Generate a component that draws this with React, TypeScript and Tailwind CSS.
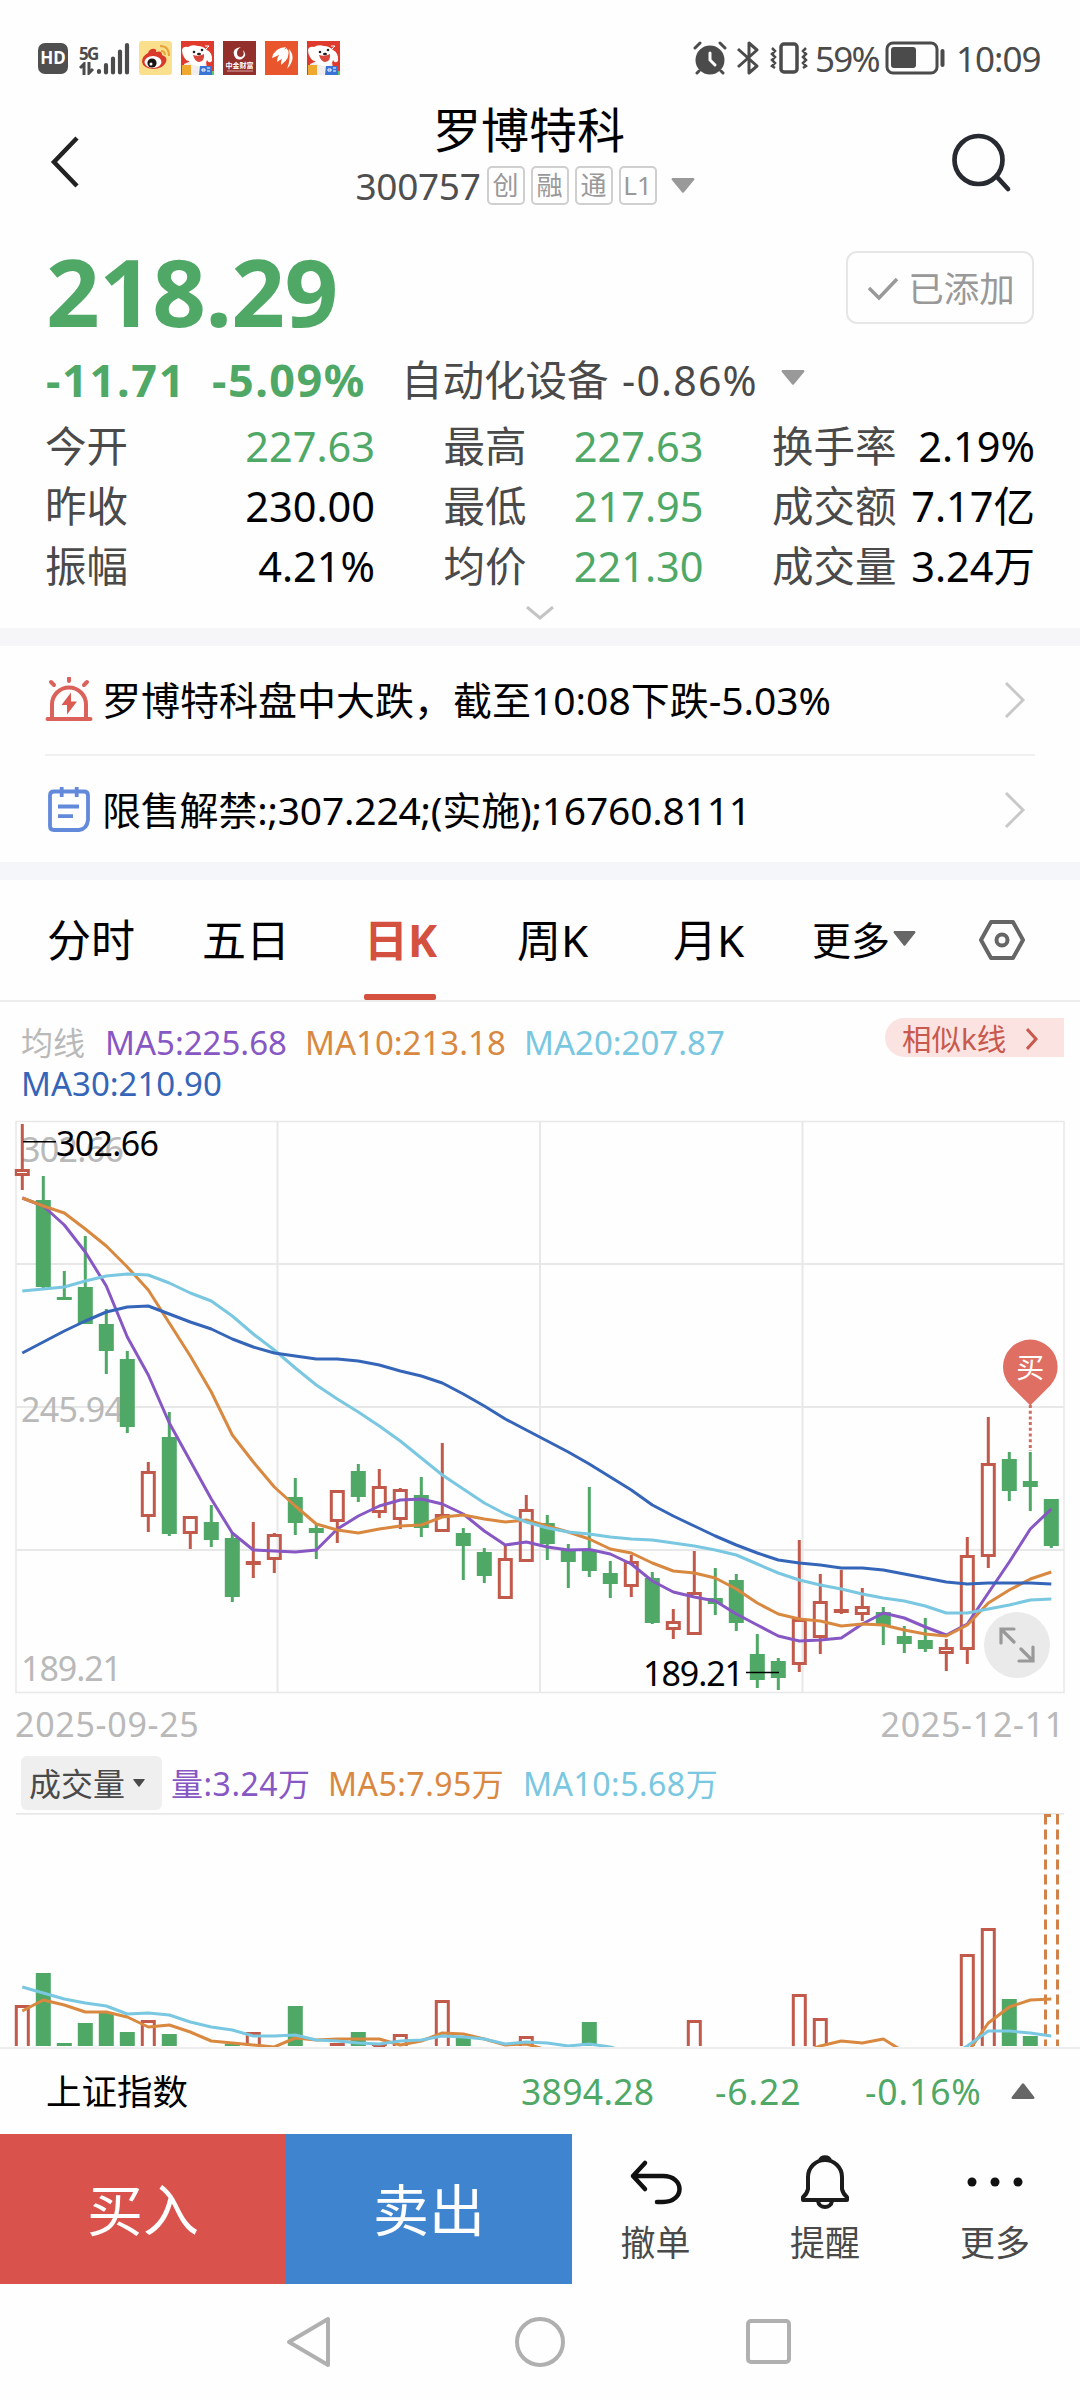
import type { ReactNode } from 'react';

type Candle = [string, number, number, number, number];

// color, high, body top, body bottom, low
const candles: Candle[] = [
  ['R', 24, 69, 76, 90], ['G', 76, 100, 187, 188], ['G', 171, 197, 200, 200], ['G', 136, 187, 224, 224], ['G', 209, 224, 251, 274],
  ['G', 251, 259, 327, 333], ['R', 362, 371, 417, 432], ['G', 312, 337, 434, 436], ['R', 416, 416, 434, 449], ['G', 405, 422, 440, 447],
  ['G', 432, 438, 497, 502], ['R', 422, 461, 465, 478], ['R', 433, 434, 460, 473], ['G', 378, 397, 423, 435], ['G', 424, 428, 433, 459],
  ['R', 390, 390, 422, 443], ['G', 364, 371, 397, 402], ['R', 369, 386, 413, 418], ['R', 388, 389, 420, 429], ['G', 377, 395, 428, 437],
  ['R', 343, 414, 432, 432], ['G', 428, 433, 446, 480], ['G', 448, 452, 476, 483], ['R', 445, 458, 499, 499], ['R', 395, 409, 462, 462],
  ['G', 415, 423, 444, 460], ['G', 444, 449, 462, 488], ['G', 387, 450, 471, 477], ['G', 461, 473, 484, 498], ['R', 455, 461, 487, 497],
  ['G', 472, 478, 523, 524], ['R', 509, 521, 530, 539], ['R', 451, 492, 535, 535], ['G', 468, 498, 504, 515], ['G', 474, 480, 523, 531],
  ['G', 534, 554, 580, 588], ['G', 558, 561, 578, 590], ['R', 440, 519, 565, 572], ['R', 474, 501, 538, 554], ['R', 470, 509, 513, 514],
  ['R', 488, 506, 515, 521], ['G', 507, 512, 526, 545], ['G', 526, 536, 544, 553], ['G', 518, 540, 549, 552], ['R', 539, 547, 554, 571],
  ['R', 437, 455, 550, 564], ['R', 317, 363, 457, 468], ['G', 352, 359, 391, 401], ['G', 352, 381, 387, 411], ['G', 399, 399, 446, 448],
];

const ma5 = [98, 106, 125, 152, 186, 237, 275, 323, 361, 399, 433, 450, 451, 452, 450, 429, 416, 406, 400, 399, 404, 414, 431, 445, 442, 447, 450, 449.5, 454, 464, 481, 492, 497, 501, 514, 525, 536, 541, 540, 538, 524, 513, 518, 527, 535, 524, 493, 462, 429, 409];
const ma10 = [98, 106, 113, 129, 146, 167, 190, 223, 256, 292, 335, 362, 387, 406, 424, 430, 433, 429, 426, 425, 417, 415, 419, 422, 420, 426, 432, 439, 449, 453, 463, 471, 473, 478, 489, 503, 514, 519, 521, 526, 524, 525, 530, 534, 536, 525, 503, 490, 479, 472];
const ma20 = [191, 189, 187, 181, 176, 174, 175, 183, 193, 201, 216, 234, 250, 268, 285, 299, 312, 326, 341, 358, 375, 389, 403, 414, 422, 428, 432, 434, 437, 439, 440, 443, 446, 450, 455, 464, 473, 480, 485, 489, 494, 498, 501, 506, 513, 513, 509, 505, 500, 499];
const ma30 = [253, 242, 231, 221, 212, 207, 206, 214, 222, 229, 239, 247, 253, 256, 259, 259, 261, 265, 271, 276, 283, 294, 306, 319, 330, 341, 352, 364, 377, 390, 405, 416, 426, 436, 445, 453, 460, 463, 465, 468, 468, 470, 474, 478, 482, 484, 483, 483, 483, 484];

// index, color, bar top
const volumes: [number, string, number][] = [
  [0, 'R', 192], [1, 'G', 160], [2, 'G', 230], [3, 'G', 210], [4, 'G', 200], [5, 'G', 219], [6, 'R', 207], [7, 'G', 221],
  [10, 'G', 231], [11, 'R', 219], [13, 'G', 193], [15, 'R', 230], [16, 'G', 219], [17, 'R', 231], [18, 'R', 221], [20, 'R', 187],
  [21, 'G', 224], [24, 'R', 223], [27, 'G', 209], [32, 'R', 207], [37, 'R', 181], [38, 'R', 205], [45, 'R', 141], [46, 'R', 115],
  [47, 'G', 186], [48, 'G', 223],
];
const volMa5 = [198, 187, 192, 199, 199, 204, 214, 212, 219, 228, 230, 232, 234, 225, 227, 226, 226, 226, 232, 228, 220, 221, 226, 232, 231, 237, 245, 245, 245, 245, 245, 245, 245, 245, 245, 245, 245, 240, 233, 228, 230, 226, 239, 250, 250, 240, 210, 194, 187, 186];
const volMa10 = [174, 180, 186, 190, 193, 201, 200, 202, 209, 214, 217, 223, 223, 222, 227, 228, 230, 231, 228, 227, 223, 224, 226, 231, 229, 230, 233, 231, 234, 240, 245, 245, 245, 245, 245, 245, 245, 245, 245, 245, 245, 245, 245, 245, 245, 233, 218, 218, 220, 223];

const RED = '#c25a4b';
const GREEN = '#4fa866';

const cx = (i: number) => 22.3 + i * 21;
const points = (ys: number[]) => ys.map((y, i) => `${cx(i)},${y}`).join(' ');

const quotes = [
  [
    { label: '今开', value: '227.63', down: true },
    { label: '昨收', value: '230.00', down: false },
    { label: '振幅', value: '4.21%', down: false },
  ],
  [
    { label: '最高', value: '227.63', down: true },
    { label: '最低', value: '217.95', down: true },
    { label: '均价', value: '221.30', down: true },
  ],
  [
    { label: '换手率', value: '2.19%', down: false },
    { label: '成交额', value: '7.17亿', down: false },
    { label: '成交量', value: '3.24万', down: false },
  ],
];

function Triangle({ className, up }: { className: string; up?: boolean }) {
  return (
    <svg className={className} viewBox="0 0 24 15" preserveAspectRatio="none" fill="currentColor">
      <path d={up ? 'M1.5 15h21q1.5-.8.6-2L13 .8q-1-1.200-2 0L.9 13q-.9 1.200.6 2z' : 'M1.5 0h21q1.5.8.6 2L13 14.200q-1 1.200-2 0L.9 2q-.9-1.200.6-2z'} />
    </svg>
  );
}

function JdIcon() {
  return (
    <svg className="h-[34px] w-[33px]" viewBox="0 0 33 34">
      <rect width="33" height="34" fill="#df3a2c" />
      <path d="M3 23l9-4 13 2 2 13H5z" fill="#f1eeee" />
      <path d="M1 9q1-4 6-3 4-3 10-1 5 0 9 4 6 3 5 11-3 3-5-1-1 6-8 6-8 0-10-5-3 0-5-4-2-3-2-7z" fill="#fff" />
      <path d="M12 14q6 2 11-1 1 7-5 8-4 0-6-7z" fill="#d9463c" />
      <circle cx="13" cy="11" r="1.300" fill="#222" />
      <circle cx="21" cy="9" r="1.300" fill="#222" />
      <ellipse cx="18" cy="13" rx="2" ry="1.300" fill="#222" />
      <path d="M24 5h4l-3 3" stroke="#fff" fill="none" />
      <path d="M1 24h9v10H1z" fill="#efa92e" />
      <path d="M19 25h12v9H18z" fill="#3a73d6" />
      <path d="M21 28h3v2h-3zM26 27h3m-3 3h3" stroke="#fff" fill="none" />
      <path d="M31 30h2v4h-2z" fill="#5cc96a" />
    </svg>
  );
}

function StatusBar() {
  return (
    <div className="flex h-[104px] items-center pt-[14px] pb-[2px] text-[#4b4b4b]">
      <div className="ml-[38px] flex h-[31px] w-[30px] items-center justify-center rounded-[7px] bg-[#4f4f4f] text-[17px] font-bold text-white">HD</div>
      <div className="ml-[11px] flex h-[34px] items-end">
        <div className="flex w-[17px] flex-col">
          <span className="text-[17px] leading-[17px] font-bold tracking-[-1.8px]">5G</span>
          <svg className="h-[13px] w-[16px]" viewBox="0 0 16 13" fill="none" stroke="currentColor" strokeWidth="3">
            <path d="M5 13V2L1 6M10 0v11l4-4" />
          </svg>
        </div>
        <svg className="h-[33px] w-[34px]" viewBox="0 0 34 33" stroke="currentColor" strokeWidth="4.200" strokeLinecap="round">
          <path d="M3 29v1M10 23v7.500M17 16.500v14M24 9.500v21M31 3v27.500" />
        </svg>
      </div>
      <svg className="ml-[9px] h-[34px] w-[33px]" viewBox="0 0 33 34">
        <rect width="33" height="34" rx="3" fill="#fae08c" />
        <path d="M3 21q0-6 6-9 2-5 7-4 2 1 1 3 6-2 6 3 6 2 4 7-3 7-13 7-10-1-11-7z" fill="#d9382b" />
        <ellipse cx="14" cy="21" rx="8.500" ry="6" fill="#fff" />
        <circle cx="13" cy="22" r="4.600" fill="#1b1414" />
        <circle cx="12" cy="23" r="1.500" fill="#fff" />
        <path d="M21 5q9 0 9 10M22 10q4 0 4 4" fill="none" stroke="#e8a23a" strokeWidth="2" />
      </svg>
      <div className="ml-[9px]"><JdIcon /></div>
      <svg className="ml-[9px] h-[34px] w-[33px]" viewBox="0 0 33 34">
        <rect width="33" height="34" fill="#93302c" />
        <path d="M18 6q-9 1-7 8 2 6 8 4 6-4 1-9 2 6-2 7-4 0-4-4 0-4 4-6z" fill="#fff" />
        <text x="16.500" y="27" fontSize="7" textAnchor="middle" fill="#fff" fontWeight="bold">中金财富</text>
        <path d="M4 30h26" stroke="#d8a8a4" strokeWidth="1" />
      </svg>
      <svg className="ml-[9px] h-[34px] w-[33px]" viewBox="0 0 33 34">
        <rect width="33" height="34" fill="#e9552c" />
        <path d="M7 17Q9 7 21 6q-4 8-14 11zM12 21Q12 12 22 7q1 8-10 14zM16 24q0-9 7-16 3 9-7 16zM22 28q4-10 2-20 8 9-2 20z" fill="#fff" />
      </svg>
      <div className="ml-[9px]"><JdIcon /></div>

      <svg className="ml-[353px] h-[36px] w-[34px]" viewBox="0 0 34 36" fill="none" stroke="currentColor" strokeWidth="3" strokeLinecap="round">
        <circle cx="17" cy="20" r="14.500" fill="currentColor" stroke="none" />
        <path d="M2 8l5-5M32 8l-5-5M6 31l-2 2M28 31l2 2" />
        <path d="M17 13v7l5 5" stroke="#fff" />
      </svg>
      <svg className="ml-[10px] h-[36px] w-[22px]" viewBox="0 0 22 36" fill="none" stroke="currentColor" strokeWidth="3" strokeLinejoin="round">
        <path d="M1 9l19 17-8 7V3l8 7L1 27" />
      </svg>
      <svg className="ml-[11px] h-[34px] w-[38px]" viewBox="0 0 38 34" fill="none" stroke="currentColor">
        <rect x="11" y="3" width="16" height="28" rx="3" strokeWidth="3.500" />
        <path d="M2 7l3 3-3 3 3 3-3 3 3 3-3 3 3 2M36 7l-3 3 3 3-3 3 3 3-3 3 3 3-3 2" strokeWidth="2.500" />
      </svg>
      <span className="ml-[7px] w-[64px] pt-[2px] text-[35px] tracking-[-1.8px] whitespace-nowrap">59%</span>
      <svg className="ml-[6px] h-[34px] w-[60px]" viewBox="0 0 60 34" fill="none" stroke="currentColor">
        <rect x="2" y="2" width="50" height="30" rx="6" strokeWidth="3" />
        <rect x="6" y="6" width="25" height="21" rx="3" fill="currentColor" stroke="none" />
        <path d="M57.500 10v14" strokeWidth="4" strokeLinecap="round" />
      </svg>
      <span className="ml-[11px] pt-[2px] text-[35px] tracking-[-1px]">10:09</span>
    </div>
  );
}

function TitleBar() {
  return (
    <div className="flex h-[108px]">
      <svg className="mt-[32px] ml-[50px] h-[52px] w-[30px] shrink-0" viewBox="0 0 30 52" fill="none" stroke="#222" strokeWidth="4.500">
        <path d="M27 2L4 26l23 24" />
      </svg>
      <div className="flex w-[890px] flex-col items-center">
        <h1 className="h-[56px] pl-[8px] text-[48px] leading-[52px] text-black">罗博特科</h1>
        <div className="flex h-[50px] items-center">
          <span className="mr-[6px] pt-[2px] text-[37px] tracking-[-0.3px] text-[#4f4f4f]">300757</span>
          <div className="flex gap-[6px]">
            {['创', '融', '通', 'L1'].map((tag) => (
              <span key={tag} className="flex h-[39px] w-[38px] items-center justify-center rounded-[5px] border-2 border-[#cfcfcf] text-[26px] leading-none text-[#999]">
                {tag}
              </span>
            ))}
          </div>
          <Triangle className="ml-[14px] h-[15px] w-[24px] text-[#999]" />
        </div>
      </div>
      <svg className="mt-[26px] -ml-[20px] h-[66px] w-[64px] shrink-0" viewBox="0 0 64 66" fill="none" stroke="#272a31" strokeWidth="4.700" strokeLinecap="round">
        <circle cx="28.500" cy="30" r="24" />
        <path d="M47 47l11 12" />
      </svg>
    </div>
  );
}

function QuoteHeader() {
  return (
    <section className="h-[416px] px-[46px]">
      <div className="flex h-[116px] justify-between">
        <div className="pt-[32px] text-[94px] leading-[94px] font-bold tracking-[-0.6px] text-[#4fa866]">218.29</div>
        <div className="mt-[39px] flex h-[73px] w-[188px] items-center justify-center gap-[9px] rounded-[11px] border-2 border-[#e6e6e6] pt-[2px] pl-[2px] text-[35.5px] text-[#999]">
          <svg className="h-[24px] w-[32px] shrink-0" viewBox="0 0 32 24" fill="none" stroke="currentColor" strokeWidth="3.500">
            <path d="M2 11l10 10L30 2" />
          </svg>
          <span>已添加</span>
        </div>
      </div>
      <div className="flex h-[88px] items-center pt-[16px] text-[41px] whitespace-nowrap">
        <span className="w-[166px] text-[45px] font-bold tracking-[1.7px] text-[#4fa866]">-11.71</span>
        <span className="w-[189px] text-[45px] font-bold tracking-[1.5px] text-[#4fa866]">-5.09%</span>
        <span className="w-[221px] text-[41.5px] text-[#4a4a4a]">自动化设备</span>
        <span className="w-[159px] pt-[2px] tracking-[1.2px] text-[#4a4a4a]">-0.86%</span>
        <Triangle className="mb-[5px] h-[15px] w-[24px] text-[#999]" />
      </div>
      <div className="-mx-px flex justify-between text-[41.5px]">
        {quotes.map((col, i) => (
          <div key={i} className={i === 1 ? 'w-[260px]' : i === 0 ? 'w-[330px]' : 'w-[263px]'}>
            {col.map((q) => (
              <div key={q.label} className="flex h-[60px] items-center justify-between leading-[60px] whitespace-nowrap">
                <span className="text-[#4a4a4a]">{q.label}</span>
                <span className={q.down ? 'text-[#4fa866]' : 'text-black'}>{q.value}</span>
              </div>
            ))}
          </div>
        ))}
      </div>
      <svg className="mx-auto mt-[10px] h-[15px] w-[28px]" viewBox="0 0 28 15" fill="none" stroke="#c4c4c4" strokeWidth="3">
        <path d="M1 1l13 11L27 1" />
      </svg>
    </section>
  );
}

function NoticeRow({ icon, children }: { icon: ReactNode; children: ReactNode }) {
  return (
    <div className="flex h-[108px] items-center">
      {icon}
      <span className="ml-[9px] flex-1 whitespace-nowrap text-black">{children}</span>
      <svg className="mr-[9px] h-[38px] w-[22px]" viewBox="0 0 22 38" fill="none" stroke="#c8c8c8" strokeWidth="3">
        <path d="M2 2l17 17L2 36" />
      </svg>
    </div>
  );
}

function Notices() {
  return (
    <section className="h-[216px] px-[45px] text-[39px]">
      <div className="border-b-2 border-[#efefef]">
        <NoticeRow
          icon={
            <svg className="h-[46px] w-[48px]" viewBox="0 0 48 46" fill="none" stroke="#db625b" strokeWidth="4" strokeLinecap="round">
              <path d="M2.500 42h43M7 41V27.500a17 17 0 0134 0V41M24 1v3" />
              <path d="M6 5l3 3M42 5l-3 3" />
              <path d="M26 15.500L16.500 28H22v9.500l10-13h-6z" fill="#db5a53" stroke="none" />
            </svg>
          }
        >
          罗博特科盘中大跌，截至10:08下跌-5.03%
        </NoticeRow>
      </div>
      <NoticeRow
        icon={
          <svg className="h-[46px] w-[48px]" viewBox="0 0 48 46" fill="none" stroke="#6389db" strokeWidth="3.800">
            <path d="M9 4.500h30q4 0 4 4V33q-1 9-9 10H9q-4 0-4-4V8.500q0-4 4-4zM16.700 0v10M31.700 0v10M13 19.500h21M13 29.200h15" />
          </svg>
        }
      >
        <span className="tracking-[-0.2px]">限售解禁:;307.224;(实施);16760.8111</span>
      </NoticeRow>
    </section>
  );
}

function Tabs() {
  return (
    <nav className="flex h-[122px] items-stretch border-b-2 border-[#ededed] text-[44px] whitespace-nowrap text-black">
      <span className="ml-[47px] w-[155px] leading-[121px]">分时</span>
      <span className="w-[162px] leading-[121px]">五日</span>
      <span className="flex w-[153px] flex-col text-[#d4513f]">
        <span className="h-[114px] font-bold leading-[121px]">日K</span>
        <span className="h-[6px] w-[72px] rounded-[2px] bg-[#d4513f]" />
      </span>
      <span className="w-[156px] leading-[121px]">周K</span>
      <span className="w-[139px] leading-[121px]">月K</span>
      <span className="w-[81px] text-[39px] leading-[119px]">更多</span>
      <Triangle className="mt-[51px] h-[15px] w-[23px] text-[#666]" />
      <svg className="mt-[39px] ml-[62px] h-[42px] w-[48px]" viewBox="0 0 48 42" fill="none" stroke="#666" strokeWidth="4">
        <path d="M13 3h22l10 18-10 18H13L3 21z" strokeLinejoin="round" />
        <circle cx="24" cy="21" r="5.500" />
      </svg>
    </nav>
  );
}

function KLineChart() {
  return (
    <div className="relative h-[600px]">
      <svg className="block h-[600px] w-[1080px]" viewBox="0 0 1080 600">
        <g stroke="#e8e8e8" strokeWidth="2" fill="none">
          <rect x="16" y="21.500" width="1048" height="571" strokeWidth="1.500" />
          <path d="M277.500 22v570M540 22v570M802.500 22v570M16 164h1048M16 307h1048M16 450h1048" />
        </g>
        <g fontSize="34" fill="#b9b9b9">
          <text x="21" y="61.500" textLength="103">302.66</text>
          <text x="21" y="321.500" textLength="103">245.94</text>
          <text x="21" y="580.500" textLength="101">189.21</text>
        </g>
        {candles.map(([c, high, top, bottom, low], i) => {
          const x = cx(i);
          if (c === 'G') {
            return (
              <g key={i} fill={GREEN}>
                <rect x={x - 1.5} y={high} width="3" height={low - high} />
                <rect x={x - 7.5} y={top} width="15" height={bottom - top} />
              </g>
            );
          }
          return (
            <g key={i} fill="none" stroke={RED} strokeWidth="3">
              <path d={`M${x} ${high}V${top + 1}M${x} ${bottom - 1}V${low}`} />
              <rect x={x - 6} y={top + 1.5} width="12" height={Math.max(bottom - top - 3, 1)} />
            </g>
          );
        })}
        <g fill="none" strokeWidth="3" strokeLinejoin="round">
          <polyline points={points(ma5)} stroke="#8757c4" />
          <polyline points={points(ma10)} stroke="#d98840" />
          <polyline points={points(ma20)} stroke="#79c7e0" />
          <polyline points={points(ma30)} stroke="#3565b8" />
        </g>
        <g stroke="#000" strokeWidth="1.500">
          <path d="M23 41.700h33M746 572.500h33" />
        </g>
        <g fontSize="34" fill="#000">
          <text x="56" y="55.500" textLength="103">302.66</text>
          <text x="643" y="586" textLength="101">189.21</text>
        </g>
        <path d="M1030.300 305v46" stroke="#cf6b60" strokeWidth="3" strokeDasharray="3 2.700" />
        <path d="M1030.300 305.500l-20-20a27.300 27.300 0 1140 0z" fill="#e06f63" />
        <text x="1030.300" y="278" fontSize="28" fill="#fff" textAnchor="middle">买</text>
      </svg>
      <button className="absolute top-[512px] left-[984px] flex size-[66px] items-center justify-center rounded-full bg-[#eaeaea]">
        <svg className="size-[38px]" viewBox="0 0 38 38" fill="none" stroke="#999" strokeWidth="3.200" strokeLinecap="round">
          <path d="M3 17V3h13M4 4l12 12M35 21v14H21M34 34L23 23" />
        </svg>
      </button>
    </div>
  );
}

function VolumeChart() {
  return (
    <svg className="block h-[234px] w-[1080px]" viewBox="0 0 1080 234">
      <path d="M16 .8h1048" stroke="#e8e8e8" strokeWidth="2" />
      {volumes.map(([i, c, top]) => {
        const x = cx(i);
        return c === 'G' ? (
          <rect key={i} x={x - 7.5} y={top} width="15" height={233 - top} fill={GREEN} />
        ) : (
          <path key={i} d={`M${x - 6} 233V${top + 1.5}h12V233`} fill="none" stroke={RED} strokeWidth="3" />
        );
      })}
      <path d="M1045.500 1.500V233M1057.500 1.500V233" stroke="#d0824a" strokeWidth="3" strokeDasharray="10 5" />
      <path d="M1044 2.500h7M1056 2.500h3" stroke="#d0824a" strokeWidth="3" />
      <g fill="none" strokeWidth="3" strokeLinejoin="round">
        <polyline points={points(volMa5)} stroke="#d98840" />
        <polyline points={points(volMa10)} stroke="#79c7e0" />
      </g>
    </svg>
  );
}

function BottomBar() {
  return (
    <div className="flex h-[150px]">
      <button className="w-[286px] bg-[#d9524b] text-[56px] text-white">买入</button>
      <button className="w-[286px] bg-[#3f84cf] text-[56px] text-white">卖出</button>
      <div className="flex flex-1 text-[35px] text-[#4a4a4a]">
        <div className="flex w-[167px] flex-col items-center pt-[22px]">
          <svg className="h-[54px] w-[54px]" viewBox="0 0 54 54" fill="none" stroke="#111" strokeWidth="4.500" strokeLinecap="round" strokeLinejoin="round">
            <path d="M16 7L4 20l12 13M4 20h30c22 0 22 26 0 26h-6" />
          </svg>
          <span className="mt-[8px] leading-[50px]">撤单</span>
        </div>
        <div className="flex w-[172px] flex-col items-center pt-[21px]">
          <svg className="h-[55px] w-[52px]" viewBox="0 0 52 55" fill="none" stroke="#1c1c1c" strokeWidth="4" strokeLinejoin="round">
            <path d="M9 22a17 17 0 0134 0v12q1 5 5 8v3H4v-3q4-3 5-8zM21 6c0-5 10-5 10 0M19 46c1 8 13 8 14 0" />
          </svg>
          <span className="mt-[8px] leading-[50px]">提醒</span>
        </div>
        <div className="flex w-[168px] flex-col items-center pt-[21px]">
          <svg className="h-[55px] w-[58px]" viewBox="0 0 58 55" fill="#111">
            <circle cx="6" cy="27" r="4.500" />
            <circle cx="29" cy="27" r="4.500" />
            <circle cx="52" cy="27" r="4.500" />
          </svg>
          <span className="mt-[8px] leading-[50px]">更多</span>
        </div>
      </div>
    </div>
  );
}

export default function App() {
  return (
    <div className="h-[2400px] w-[1080px] overflow-hidden bg-[#fefefe] font-['Noto_Sans','Noto_Sans_CJK_SC',sans-serif]">
      <StatusBar />
      <TitleBar />
      <QuoteHeader />
      <div className="h-[18px] bg-[#f6f6f8]" />
      <Notices />
      <div className="h-[18px] bg-[#f5f6f9]" />
      <Tabs />

      <div className="flex h-[98px] justify-between pt-[16px] pl-[21px] text-[33px] leading-[42px] whitespace-nowrap">
        <div className="pt-[4px]">
          <div className="flex h-[41px]">
            <span className="w-[84px] text-[32px] text-[#b9b9b9]">均线</span>
            <span className="w-[200px] text-[#8757c4]">MA5:225.68</span>
            <span className="w-[219px] text-[#d98840]">MA10:213.18</span>
            <span className="text-[#79c7e0]">MA20:207.87</span>
          </div>
          <div className="text-[#3565b8]">MA30:210.90</div>
        </div>
        <div className="mr-[16px] flex h-[39px] w-[179px] items-center rounded-l-[20px] bg-[#fae3e0] pt-[3px] pl-[17px] text-[29.5px] text-[#c9584e]">
          <span className="w-[124px]">相似k线</span>
          <svg className="h-[22px] w-[12px]" viewBox="0 0 12 22" fill="none" stroke="currentColor" strokeWidth="3">
            <path d="M1 1l9 10-9 10" />
          </svg>
        </div>
      </div>

      <KLineChart />

      <div className="flex h-[56px] justify-between px-[15px] text-[34px] leading-[48px] tracking-[0.7px] text-[#b9b9b9]">
        <span>2025-09-25</span>
        <span>2025-12-11</span>
      </div>
      <div className="flex h-[57px] pl-[21px] text-[32px] leading-[55px] tracking-[0.5px] whitespace-nowrap">
        <div className="mr-[9px] flex h-[54px] w-[141px] items-center gap-[8px] rounded-[6px] bg-[#efefef] pl-[8px] tracking-normal text-[#4a4a4a]">
          <span>成交量</span>
          <Triangle className="h-[8px] w-[12px]" />
        </div>
        <span className="w-[157px] text-[#8757c4]">量:3.24万</span>
        <span className="w-[195px] text-[#d98840]">MA5:7.95万</span>
        <span className="text-[#79c7e0]">MA10:5.68万</span>
      </div>
      <VolumeChart />

      <div className="flex h-[87px] items-center border-t-2 border-[#ededed] pl-[46px] text-[35.5px] whitespace-nowrap text-[#4fa866]">
        <span className="w-[475px] text-black">上证指数</span>
        <span className="w-[194px] tracking-[0.3px]">3894.28</span>
        <span className="w-[150px] tracking-[0.9px]">-6.22</span>
        <span className="w-[146px] tracking-[0.9px]">-0.16%</span>
        <Triangle up className="mb-[2px] h-[16px] w-[24px] text-[#666]" />
      </div>
      <BottomBar />

      <div className="flex h-[116px] items-center">
        <svg className="ml-[286px] h-[52px] w-[46px]" viewBox="0 0 46 52" fill="none" stroke="#b0b0b0" strokeWidth="4" strokeLinejoin="round">
          <path d="M42 3v46L3 26z" />
        </svg>
        <svg className="ml-[183px] size-[52px]" viewBox="0 0 52 52" fill="none" stroke="#b0b0b0" strokeWidth="4">
          <circle cx="25" cy="26" r="23" />
        </svg>
        <svg className="ml-[178px] size-[48px]" viewBox="0 0 48 48" fill="none" stroke="#b0b0b0" strokeWidth="4">
          <rect x="3" y="3" width="41" height="41" rx="3" />
        </svg>
      </div>
    </div>
  );
}
